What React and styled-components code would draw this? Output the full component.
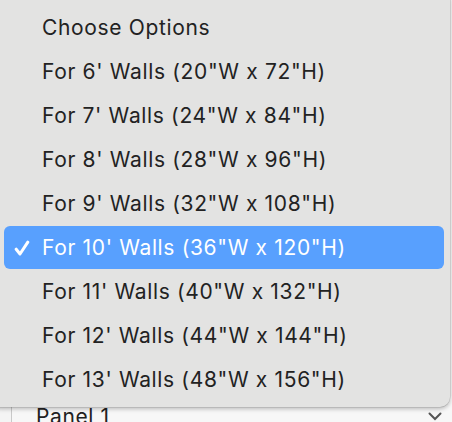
import React from "react";
import styled, { createGlobalStyle } from "styled-components";

const GlobalStyle = createGlobalStyle`
  html, body {
    margin: 0;
    padding: 0;
    background: #f4f4f4;
    overflow: hidden;
  }
  body {
    font-family: "Inter", "Liberation Sans", sans-serif;
  }
`;

const Page = styled.div`
  position: relative;
  width: 452px;
  height: 422px;
  overflow: hidden;
`;

const Field = styled.div`
  display: flex;
  align-items: center;
  justify-content: space-between;
  margin: 396px 0 0 11px;
  height: 40px;
  padding: 0 10px 0 24px;
  border-left: 1px solid #c9c9c9;
  background: #f7f7f7;
  color: #222;
  font-size: 21px;
  letter-spacing: 0.6px;
`;

const Menu = styled.ul`
  position: absolute;
  top: -10px;
  left: -10px;
  width: 460px;
  margin: 0;
  padding: 16px 0 5px;
  list-style: none;
  background: #e3e3e2;
  border-radius: 10px;
  box-shadow: 0 2px 4px rgba(0, 0, 0, 0.25), 0 0 0 0.5px rgba(0, 0, 0, 0.15);
`;

const Item = styled.li`
  display: flex;
  align-items: center;
  height: 43px;
  margin: 0 6px 1px 14px;
  padding-left: 38px;
  position: relative;
  border-radius: 6px;
  font-size: 21px;
  letter-spacing: 0.65px;
  color: ${(p) => (p.$active ? "#ffffff" : "#222222")};
  background: ${(p) => (p.$active ? "#58a0fe" : "transparent")};
`;

const Check = styled.svg`
  position: absolute;
  left: 10px;
  top: 14px;
`;

const options = [
  "Choose Options",
  "For 6' Walls (20\"W x 72\"H)",
  "For 7' Walls (24\"W x 84\"H)",
  "For 8' Walls (28\"W x 96\"H)",
  "For 9' Walls (32\"W x 108\"H)",
  "For 10' Walls (36\"W x 120\"H)",
  "For 11' Walls (40\"W x 132\"H)",
  "For 12' Walls (44\"W x 144\"H)",
  "For 13' Walls (48\"W x 156\"H)",
];

export default function App() {
  const selected = 5;
  return (
    <Page>
      <GlobalStyle />
      <Field>
        <span>Panel 1</span>
        <svg width="14" height="9" viewBox="0 0 14 9">
          <path d="M1.5 1.5 L7 7 L12.5 1.5" fill="none" stroke="#555" strokeWidth="2" strokeLinecap="round" />
        </svg>
      </Field>
      <Menu>
        {options.map((o, i) => (
          <Item key={o} $active={i === selected}>
            {i === selected && (
              <Check width="16" height="16" viewBox="0 0 16 16">
                <path d="M2.2 9.2 L6 14 L13.8 2.2" fill="none" stroke="#fff" strokeWidth="3" strokeLinecap="round" strokeLinejoin="round" />
              </Check>
            )}
            {o}
          </Item>
        ))}
      </Menu>
    </Page>
  );
}
